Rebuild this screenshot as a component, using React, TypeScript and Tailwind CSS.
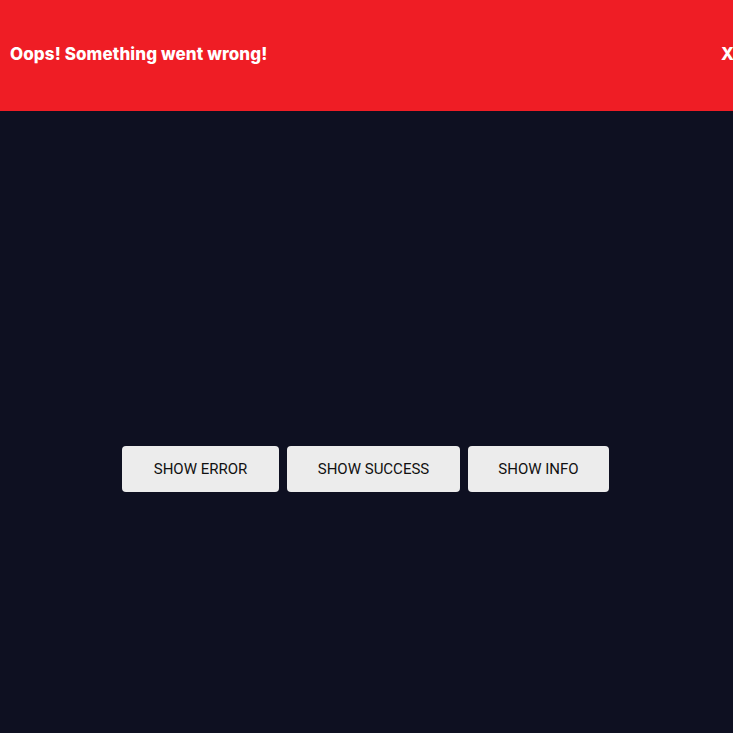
const App = () => {
  return (
    <div className="relative w-[733px] h-[733px] overflow-hidden bg-[#0e1021]">
      <div className="flex items-center justify-between w-[744px] h-[111px] pl-[10px] pr-[10px] pb-[2px] bg-[#ef1d25] text-white font-extrabold text-[17px] font-['Inter',sans-serif]">
        <span className="tracking-[0.1px]">Oops! Something went wrong!</span>
        <span className="text-[17px]">X</span>
      </div>
      <div className="flex justify-center gap-2 pt-[335px] pr-[2px]">
        <button className="h-[46px] w-[157px] rounded-[4px] bg-[#ececec] text-[15px] text-[#111] uppercase font-['Roboto',sans-serif]">
          Show Error
        </button>
        <button className="h-[46px] w-[173px] rounded-[4px] bg-[#ececec] text-[15px] text-[#111] uppercase font-['Roboto',sans-serif]">
          Show Success
        </button>
        <button className="h-[46px] w-[141px] rounded-[4px] bg-[#ececec] text-[15px] text-[#111] uppercase font-['Roboto',sans-serif]">
          Show Info
        </button>
      </div>
    </div>
  );
};

export default App;
